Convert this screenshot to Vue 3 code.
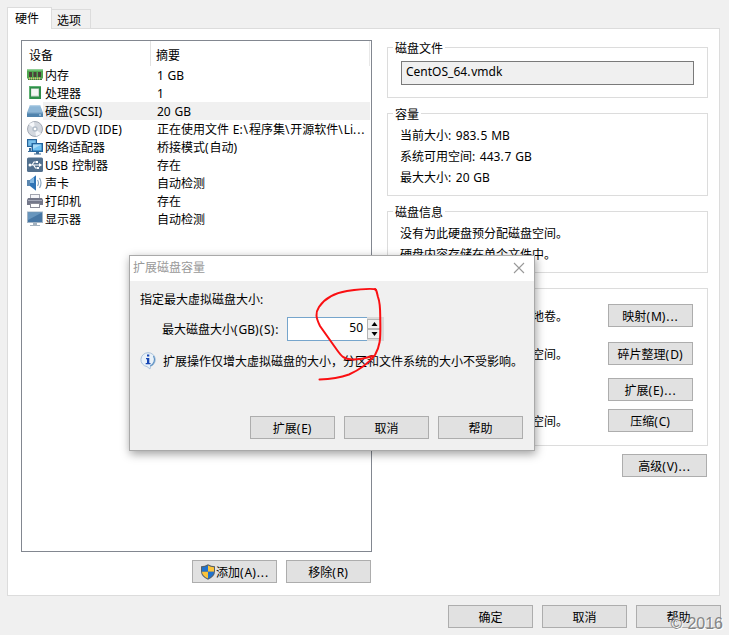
<script setup>
import { h } from 'vue'

const devices = [
  { icon: 'memory', name: '内存', summary: '1 GB' },
  { icon: 'cpu', name: '处理器', summary: '1' },
  { icon: 'disk', name: '硬盘(SCSI)', summary: '20 GB', selected: true },
  { icon: 'cd', name: 'CD/DVD (IDE)', summary: '正在使用文件 E:\\程序集\\开源软件\\Li...' },
  { icon: 'network', name: '网络适配器', summary: '桥接模式(自动)' },
  { icon: 'usb', name: 'USB 控制器', summary: '存在' },
  { icon: 'sound', name: '声卡', summary: '自动检测' },
  { icon: 'printer', name: '打印机', summary: '存在' },
  { icon: 'display', name: '显示器', summary: '自动检测' },
]
const capacity = ['当前大小: 983.5 MB', '系统可用空间: 443.7 GB', '最大大小: 20 GB']
const tools = [
  { text: '将此虚拟机磁盘映射到本地卷。', button: '映射(M)...' },
  { text: '整理文件碎片并整合可用空间。', button: '碎片整理(D)' },
  { text: '扩展磁盘容量。', button: '扩展(E)...' },
  { text: '压缩磁盘以回收未使用的空间。', button: '压缩(C)' },
]

// Gives ASCII punctuation a little more room beside the ideographs.
const Txt = (props) =>
  h(
    'span',
    props.t
      .split(/([():.\\]+)/)
      .filter(Boolean)
      .map((s) => (/^[():.\\]/.test(s) ? h('span', { class: 'punct' }, s) : s)),
  )
Txt.props = ['t']
</script>

<template>
  <div class="window">
    <nav class="tabs">
      <div class="tab active">硬件</div>
      <div class="tab">选项</div>
    </nav>

    <main class="page">
      <section class="left">
        <div class="list">
          <div class="head"><span class="c1">设备</span><span class="c2">摘要</span></div>
          <div v-for="d in devices" :key="d.name" class="row" :class="{ selected: d.selected }">
            <svg class="ico" width="16" height="16" viewBox="0 0 16 16">
              <g v-if="d.icon === 'memory'">
                <path d="M0 2.500h16v9H0z" fill="#4fa84f" />
                <path d="M0 2.500h16v1.200H0z" fill="#7cc884" />
                <path d="M2 5h3v5H2zM6.500 5h3v5h-3zM11 5h3v5h-3z" fill="#4b4038" />
                <path d="M1 11.500h14V13H1z" fill="#3b7a3c" />
                <path d="M2 10.500h1v2H2zM4 10.500h1v2H4zM6 10.500h1v2H6zM8 10.500h1v2H8zM10 10.500h1v2h-1zM12 10.500h1v2h-1z" fill="#d8c56b" />
              </g>
              <g v-else-if="d.icon === 'cpu'">
                <path d="M2 1h12v13H2z" fill="#2f8f4a" />
                <path d="M2 1h12v1H3v12H2z" fill="#5fb173" />
                <path d="M4 3.500h8v8H4z" fill="#cfd6cf" />
                <path d="M4.500 4h6.500v6.500H4.500z" fill="#f4f6f4" />
              </g>
              <g v-else-if="d.icon === 'disk'">
                <path d="M3 2h10l3 7.500H0z" fill="#8db6d6" />
                <path d="M3 2h10l.5 1.200h-11z" fill="#b5d1e6" />
                <path d="M0 9.500h16V14H0z" fill="#5083ad" />
                <path d="M0 9.500h16v1H0z" fill="#79a6cb" />
                <path d="M12 11.500h2v1h-2z" fill="#c7e2f3" />
              </g>
              <g v-else-if="d.icon === 'cd'">
                <circle cx="8" cy="8" r="7.500" fill="#d3d8df" stroke="#9299a6" stroke-width=".8" />
                <path d="M8 8L2 3.500A7.300 7.300 0 0 1 7 .9zM8 8l6 4.500A7.300 7.300 0 0 1 9 15z" fill="#f5f7fa" />
                <circle cx="8" cy="8" r="2.700" fill="#b2bdc9" />
                <circle cx="8" cy="8" r="1.300" fill="#fff" />
              </g>
              <g v-else-if="d.icon === 'network'">
                <path d="M0 0h10v8H0z" fill="#27649a" />
                <path d="M1.200 1.200h7.600v5.600H1.200z" fill="#79c1ec" />
                <path d="M2 9h2v3H2zM1 12h5v1H1z" fill="#3a6e9c" />
                <path d="M4.500 4H16v9H4.500z" fill="#22659f" />
                <path d="M6 5.500h8.600v6H6z" fill="#6fc2f2" />
                <path d="M6 5.500h8.600L6 10z" fill="#a7dcf8" />
                <path d="M9 13h3v1.500H9zM7 14.500h7v1H7z" fill="#416d94" />
              </g>
              <g v-else-if="d.icon === 'usb'">
                <rect x="0" y=".5" width="16" height="14.500" rx="1.500" fill="#52708e" />
                <path d="M2 8h11M5 8l2-3h2M6.500 8l2 3h2" fill="none" stroke="#fff" stroke-width="1.100" />
                <circle cx="3" cy="8" r="1.500" fill="#fff" />
                <path d="M12 6l3 2-3 2zM9 4h2v2H9zM10 10h2v2h-2z" fill="#fff" />
              </g>
              <g v-else-if="d.icon === 'sound'">
                <path d="M0 5h4v6H0z" fill="#5b87b0" />
                <path d="M3 5L9 .3v15.400L3 11z" fill="#2f74b5" />
                <path d="M3 5.500l4-3.500v6H3z" fill="#85b9e2" />
                <path d="M10.500 5q2 3 0 6M12.500 3q3 5 0 10" fill="none" stroke="#8fabc4" stroke-width="1.200" />
              </g>
              <g v-else-if="d.icon === 'printer'">
                <path d="M3 1h10v6H3z" fill="#a2a5b0" />
                <path d="M4 2h8v4H4z" fill="#f6f6fa" />
                <path d="M1 5h14l1 2v5H0V7z" fill="#74788a" />
                <path d="M1 7h14v1H1z" fill="#a7abba" />
                <path d="M3 10h10v5H3z" fill="#8a8c98" />
                <path d="M4 11h8v3H4z" fill="#fff" />
              </g>
              <g v-else>
                <path d="M0 .5h16V12H0z" fill="#a3b5c6" />
                <path d="M1 1.500h14V11H1z" fill="#4676a4" />
                <path d="M1 1.500h14L1 9z" fill="#6795bd" />
                <path d="M6 12h4v2H6zM3 14h10v1H3z" fill="#a4b2bf" />
              </g>
            </svg>
            <Txt class="name" :t="d.name" />
            <Txt class="summary" :t="d.summary" />
          </div>
        </div>
        <div class="list-actions">
          <button class="btn">
            <svg width="16" height="16" viewBox="0 0 16 16">
              <path d="M8 .3q3 2 7 2v5q0 5.500-7 8.500-7-3-7-8.500v-5q4 0 7-2z" fill="#55606a" />
              <path d="M8 1.500v6.300H2V3.200q3.500 0 6-1.700z" fill="#1f72cd" />
              <path d="M8 1.500q2.500 1.700 6 1.700v4.600H8z" fill="#fbc43b" />
              <path d="M2 7.800h6v6.800q-5.800-2.600-6-6.800z" fill="#fbc43b" />
              <path d="M14 7.800H8v6.800q5.800-2.600 6-6.800z" fill="#1f72cd" />
            </svg>
            <Txt t="添加(A)..." />
          </button>
          <button class="btn"><Txt t="移除(R)" /></button>
        </div>
      </section>

      <section class="right">
        <div class="group file">
          <div class="legend">磁盘文件</div>
          <div class="path"><Txt t="CentOS_64.vmdk" /></div>
        </div>
        <div class="group cap">
          <div class="legend">容量</div>
          <p v-for="c in capacity" :key="c"><Txt :t="c" /></p>
        </div>
        <div class="group info">
          <div class="legend">磁盘信息</div>
          <p>没有为此硬盘预分配磁盘空间。</p>
          <p>硬盘内容存储在单个文件中。</p>
        </div>
        <div class="group tools">
          <div v-for="t in tools" :key="t.button" class="tool">
            <span>{{ t.text }}</span>
            <button class="btn"><Txt :t="t.button" /></button>
          </div>
        </div>
        <button class="btn advanced"><Txt t="高级(V)..." /></button>
      </section>
    </main>

    <footer class="footer">
      <button class="btn">确定</button>
      <button class="btn">取消</button>
      <button class="btn">帮助</button>
    </footer>
    <div class="watermark">© 2016</div>

    <div class="dialog">
      <header class="title">
        <span>扩展磁盘容量</span>
        <svg width="12" height="12" viewBox="0 0 12 12"><path d="M1 1l10 10M11 1L1 11" stroke="#999" stroke-width="1.100" /></svg>
      </header>
      <p class="prompt"><Txt t="指定最大虚拟磁盘大小:" /></p>
      <div class="size">
        <label><Txt t="最大磁盘大小(GB)(S):" /></label>
        <div class="spin">
          <div class="value">50</div>
          <div class="arrows">
            <i><svg width="7" height="4" viewBox="0 0 7 4"><path d="M3.500 0L6.500 4h-6z" /></svg></i>
            <i><svg width="7" height="4" viewBox="0 0 7 4"><path d="M3.500 4L6.500 0h-6z" /></svg></i>
          </div>
        </div>
      </div>
      <div class="note">
        <svg width="16" height="18" viewBox="0 0 16 18">
          <path d="M8 .7a7.300 7 0 0 1 2.500 13.600L10 17l-3-2.400A7.300 7 0 0 1 8 .7z" fill="#e9f1f8" stroke="#a9c1da" stroke-width="1" />
          <path d="M13.500 4a7 7 0 0 1-3.300 10" fill="none" stroke="#5f92c3" stroke-width="1.200" />
          <path d="M7 2.500h2.300v2H7zM6 6h3.300v5h1.200v1.200H5.700V11H7V7.200H6z" fill="#1746b4" />
        </svg>
        <span>扩展操作仅增大虚拟磁盘的大小，分区和文件系统的大小不受影响。</span>
      </div>
      <div class="dialog-actions">
        <button class="btn"><Txt t="扩展(E)" /></button>
        <button class="btn">取消</button>
        <button class="btn">帮助</button>
      </div>
    </div>

    <svg class="ink" width="80" height="100" viewBox="310 284 80 100">
      <path d="M376 290C374 288 362 289 347 291C334 293 325 298 319 307C315 313 316 318 320 326C327 336 332 343 337 350C342 357 344 359 352 359.500C359 360 366 358 373 356" />
      <path d="M375 289C377 290 377 294 378 297C381 305 380 314 380.300 324C380.500 340 380 346 375 355C368 364 359 370 349 374.500C339 378 333 379 319.500 379.500" />
    </svg>
  </div>
</template>

<style>
body {
  margin: 0;
  background: #f0f0f0;
  overflow: hidden;
}
</style>

<style scoped>
* {
  box-sizing: border-box;
}
.window {
  position: relative;
  width: 729px;
  height: 635px;
  padding: 7px 8px 0 7px;
  overflow: hidden;
  background: #f0f0f0;
  color: #000;
  font: 12px/18px "Noto Sans", "Noto Sans CJK SC", sans-serif;
  word-spacing: 0.6px;
  white-space: nowrap;
}
.window :deep(.punct) {
  letter-spacing: 0.9px;
}
p {
  margin: 0;
}
.tabs {
  display: flex;
  align-items: flex-end;
  height: 21px;
}
.tab {
  width: 39px;
  height: 19px;
  padding-left: 5px;
  line-height: 21px;
  border: 1px solid #dcdcdc;
  border-width: 1px 1px 0 0;
}
.tab.active {
  position: relative;
  width: 45px;
  height: 22px;
  margin-bottom: -1px;
  padding-left: 7px;
  border-left-width: 1px;
  background: #fff;
}
.page {
  display: flex;
  gap: 15px;
  width: 713px;
  height: 568px;
  padding: 11px 11px 0 13px;
  border: 1px solid #dcdcdc;
  background: #fff;
}
.left {
  flex: none;
  width: 351px;
}
.list {
  height: 512px;
  border: 1px solid #828790;
}
.head {
  display: flex;
  height: 25px;
  padding-left: 7px;
  line-height: 30px;
}
.c1 {
  width: 122px;
  border-right: 1px solid #e2e2e2;
}
.c2 {
  flex: 1;
  margin-right: 1px;
  padding-left: 5px;
  border-right: 1px solid #e8e8e8;
}
.row {
  display: flex;
  height: 18px;
  padding: 0 1px 0 5px;
  line-height: 20px;
}
.ico {
  flex: none;
  margin-top: 1px;
}
.name {
  width: 108px;
  height: 18px;
  padding-left: 2px;
}
.summary {
  flex: 1;
  height: 18px;
  padding-left: 6px;
}
.selected .name,
.selected .summary {
  background: #f0f0f0;
}
.list-actions {
  display: flex;
  justify-content: flex-end;
  gap: 9px;
  margin: 8px 1px 0 0;
}
.btn {
  display: flex;
  flex: none;
  align-items: center;
  justify-content: center;
  width: 85px;
  height: 23px;
  padding: 3px 0 0;
  border: 1px solid #adadad;
  border-radius: 0;
  background: #e1e1e1;
  color: #000;
  font: inherit;
  word-spacing: inherit;
}
.btn svg {
  flex: none;
  margin-top: -3px;
}
.right {
  flex: none;
  width: 321px;
  padding-top: 7px;
}
.group {
  padding-left: 12px;
  border: 1px solid #dcdcdc;
}
.legend {
  width: max-content;
  height: 18px;
  margin: -9px 0 0 -7px;
  padding: 0 2px;
  background: #fff;
  line-height: 20px;
}
.file {
  height: 51px;
}
.path {
  width: 293px;
  height: 24px;
  margin: 4px 0 0 1px;
  padding-left: 4px;
  border: 1px solid #7a7a7a;
  background: #f0f0f0;
  line-height: 20px;
}
.cap {
  height: 83px;
  margin-top: 15px;
}
.cap p,
.info p {
  line-height: 21px;
}
.cap .legend + p,
.info .legend + p {
  margin-top: 2px;
}
.info {
  height: 62px;
  margin-top: 15px;
}
.tools {
  height: 158px;
  margin-top: 15px;
  padding-top: 15px;
  padding-right: 14px;
}
.tool {
  display: flex;
  align-items: center;
  justify-content: space-between;
  height: 23px;
  margin-bottom: 15px;
}
.tool > span {
  padding-top: 2px;
}
.tool:nth-child(2) {
  margin-bottom: 13px;
}
.tool:nth-child(3) {
  margin-bottom: 8px;
}
.advanced {
  margin: 8px 1px 0 auto;
}
.footer {
  display: flex;
  justify-content: flex-end;
  gap: 9px;
  margin-top: 9px;
}
.watermark {
  position: absolute;
  right: 6px;
  bottom: 1px;
  color: #858585;
  font: 16px/20px "Liberation Sans", sans-serif;
  text-shadow: 1px 1px 0 #fff;
}
.dialog {
  position: absolute;
  left: 129px;
  top: 255px;
  width: 406px;
  height: 196px;
  border: 1px solid #a9a9a9;
  background: #f0f0f0;
  box-shadow: 1px 3px 9px rgba(0, 0, 0, 0.38);
}
.title {
  display: flex;
  align-items: center;
  justify-content: space-between;
  height: 25px;
  padding: 0 9px 1px 3px;
  background: #fff;
  color: #999;
}
.prompt {
  height: 18px;
  margin: 9px 0 0 10px;
  line-height: 20px;
}
.size {
  display: flex;
  align-items: center;
  height: 24px;
  margin: 9px 0 0 32px;
}
.size label {
  width: 125px;
  padding-top: 2px;
}
.spin {
  display: flex;
  width: 97px;
  height: 24px;
  background: #d9d9d9;
}
.value {
  width: 80px;
  padding-right: 4px;
  border: 1px solid #76a5cc;
  border-right: 0;
  background: #fff;
  line-height: 20px;
  text-align: right;
}
.arrows {
  display: flex;
  flex-direction: column;
  width: 14px;
  padding-top: 2px;
}
.arrows i {
  display: flex;
  align-items: center;
  justify-content: center;
  height: 10px;
  border: 1px solid #b5b5b5;
  background: #f0f0f0;
}
.note {
  display: flex;
  gap: 7px;
  height: 18px;
  margin: 11px 0 0 10px;
  line-height: 20px;
}
.dialog-actions {
  display: flex;
  gap: 9px;
  margin: 46px 0 0 120px;
}
.ink {
  position: absolute;
  left: 310px;
  top: 284px;
  fill: none;
  stroke: #fa0f12;
  stroke-width: 2;
  stroke-linecap: round;
}
</style>
